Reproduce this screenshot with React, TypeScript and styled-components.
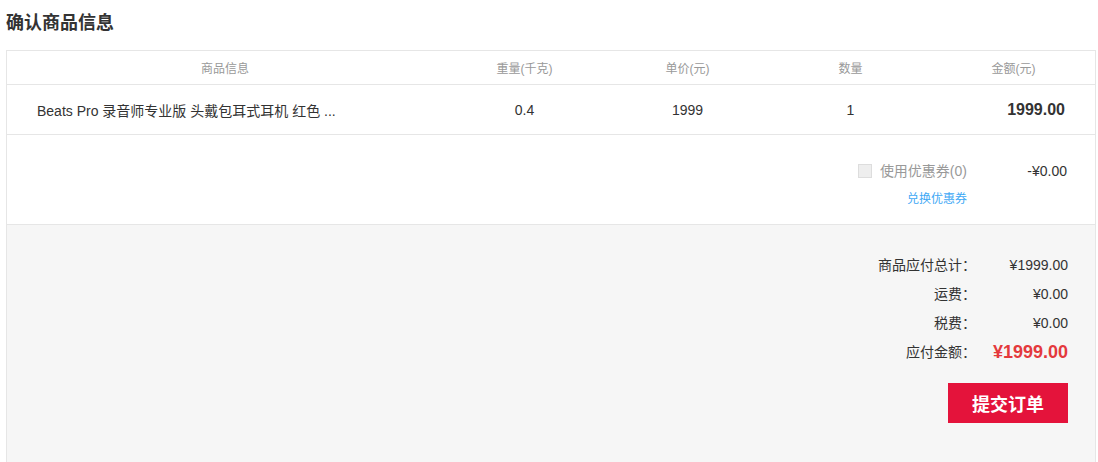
import styled, { createGlobalStyle } from "styled-components"

const GlobalStyle = createGlobalStyle`
    body {
        margin: 0;
        background: #fff;
        font-family: "Liberation Sans", Arial, "Noto Sans CJK SC", sans-serif;
        color: #333;
    }
`

const columns = ["商品信息", "重量(千克)", "单价(元)", "数量", "金额(元)"]

const summary = [
    { label: "商品应付总计：", value: "¥1999.00" },
    { label: "运费：", value: "¥0.00" },
    { label: "税费：", value: "¥0.00" },
]

export default function App() {
    return (
        <Page>
            <GlobalStyle />
            <Title>确认商品信息</Title>
            <Box>
                <Row $head>
                    {columns.map((c) => (
                        <Cell key={c}>{c}</Cell>
                    ))}
                </Row>
                <Row>
                    <Cell $left>Beats Pro 录音师专业版 头戴包耳式耳机 红色 ...</Cell>
                    <Cell>0.4</Cell>
                    <Cell>1999</Cell>
                    <Cell>1</Cell>
                    <Cell $right $bold>1999.00</Cell>
                </Row>
                <Coupon>
                    <CouponCheck>
                        <Checkbox />
                        使用优惠券(0)
                    </CouponCheck>
                    <CouponValue>-¥0.00</CouponValue>
                    <Exchange>兑换优惠券</Exchange>
                </Coupon>
                <Summary>
                    <Totals>
                        {summary.map((s) => (
                            <TotalLine key={s.label}>
                                <Label>{s.label}</Label>
                                <Value>{s.value}</Value>
                            </TotalLine>
                        ))}
                        <TotalLine>
                            <Label>应付金额：</Label>
                            <Value $pay>¥1999.00</Value>
                        </TotalLine>
                    </Totals>
                    <Submit>提交订单</Submit>
                </Summary>
            </Box>
        </Page>
    )
}

const Page = styled.div`
    margin: 0 2px 0 6px;
`

const Title = styled.h2`
    margin: 0;
    padding: 11px 0 15px;
    font-size: 18px;
    line-height: 24px;
    font-weight: bold;
    color: #333;
`

const Box = styled.section`
    border: 1px solid #e6e6e6;
    border-bottom: none;
`

const Row = styled.div<{ $head?: boolean }>`
    display: grid;
    grid-template-columns: 436px repeat(4, 1fr);
    align-items: center;
    height: ${(p) => (p.$head ? "33px" : "49px")};
    border-bottom: 1px solid #e6e6e6;
    font-size: ${(p) => (p.$head ? "12px" : "14px")};
    color: ${(p) => (p.$head ? "#999" : "#333")};
`

const Cell = styled.div<{ $left?: boolean; $right?: boolean; $bold?: boolean }>`
    text-align: ${(p) => (p.$left ? "left" : p.$right ? "right" : "center")};
    padding: ${(p) => (p.$left ? "0 0 0 30px" : p.$right ? "0 30px 0 0" : "0")};
    font-weight: ${(p) => (p.$bold ? "bold" : "normal")};
    font-size: ${(p) => (p.$bold ? "16px" : "inherit")};
    white-space: nowrap;
`

const Coupon = styled.div`
    display: grid;
    grid-template-columns: auto 100px;
    justify-content: end;
    align-content: start;
    row-gap: 10px;
    height: 90px;
    padding: 26px 28px 0 0;
    border-bottom: 1px solid #e6e6e6;
    box-sizing: border-box;
`

const CouponCheck = styled.label`
    display: flex;
    align-items: center;
    gap: 8px;
    font-size: 14px;
    line-height: 20px;
    color: #999;
`

const Checkbox = styled.span`
    width: 12px;
    height: 12px;
    border: 1px solid #ddd;
    background: #eee;
`

const CouponValue = styled.span`
    font-size: 14px;
    line-height: 20px;
    text-align: right;
    color: #333;
`

const Exchange = styled.a`
    font-size: 12px;
    line-height: 16px;
    color: #3fa9f5;
    text-align: right;
    cursor: pointer;
`

const Summary = styled.div`
    display: flex;
    flex-direction: column;
    align-items: flex-end;
    background: #f6f6f6;
    padding: 26px 27px 60px 0;
`

const Totals = styled.div`
    display: grid;
    grid-template-columns: auto 92px;
`

const TotalLine = styled.div`
    display: contents;
`

const Label = styled.span`
    font-size: 14px;
    line-height: 29px;
    text-align: right;
    color: #333;
`

const Value = styled.span<{ $pay?: boolean }>`
    font-size: ${(p) => (p.$pay ? "18px" : "14px")};
    font-weight: ${(p) => (p.$pay ? "bold" : "normal")};
    color: ${(p) => (p.$pay ? "#e4393c" : "#333")};
    line-height: 29px;
    text-align: right;
`

const Submit = styled.button`
    margin-top: 16px;
    width: 120px;
    height: 40px;
    border: none;
    background: #e4133b;
    color: #fff;
    font-family: inherit;
    font-size: 18px;
    font-weight: bold;
    cursor: pointer;
`
